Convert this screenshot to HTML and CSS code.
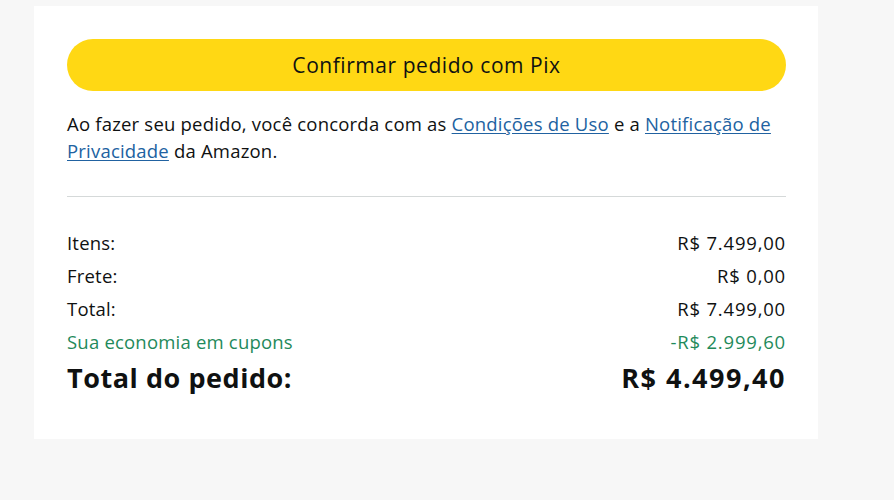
FILE: index.html
```html
<!DOCTYPE html>
<html lang="pt-BR">
<head>
<meta charset="utf-8">
<title>Confirmar pedido</title>
<link rel="stylesheet" href="styles.css">
</head>
<body>
<div class="page">
  <section class="card">
    <button class="place-order" type="button">Confirmar pedido com Pix</button>
    <p class="legal">Ao fazer seu pedido, você concorda com as <a href="#">Condições de Uso</a> e a <a href="#">Notificação de Privacidade</a> da Amazon.</p>
    <hr class="divider">
    <div class="summary">
      <div class="row"><span>Itens:</span><span class="value">R$ 7.499,00</span></div>
      <div class="row"><span>Frete:</span><span class="value">R$ 0,00</span></div>
      <div class="row"><span>Total:</span><span class="value">R$ 7.499,00</span></div>
      <div class="row savings"><span>Sua economia em cupons</span><span class="value">-R$ 2.999,60</span></div>
      <div class="row grand"><span>Total do pedido:</span><span class="value">R$ 4.499,40</span></div>
    </div>
  </section>
</div>
</body>
</html>
```

FILE: styles.css
```css
html, body {
  margin: 0;
  padding: 0;
  background: #f7f7f7;
}

body {
  font-family: "Open Sans", "Noto Sans", "Liberation Sans", sans-serif;
  color: #0f1111;
}

.page {
  padding: 6px 0 0 34px;
}

.card {
  width: 784px;
  box-sizing: border-box;
  background: #ffffff;
  padding: 33px 32px 43px 33px;
}

.place-order {
  display: block;
  width: 100%;
  height: 52px;
  border: none;
  border-radius: 26px;
  background: #ffd814;
  color: #0f1111;
  font-family: inherit;
  font-size: 21px;
  font-weight: 400;
  letter-spacing: 0.55px;
  cursor: pointer;
  padding: 0;
}

.legal {
  margin: 19px 0 0;
  font-size: 18.5px;
  line-height: 27px;
  letter-spacing: 0.2px;
}

.legal a {
  color: #2162a1;
  text-decoration: underline;
  text-underline-offset: 2px;
}

.divider {
  border: none;
  border-top: 1px solid #d5d9d9;
  margin: 32px 0 0;
}

.summary {
  margin-top: 29px;
  display: flex;
  flex-direction: column;
}

.row {
  display: flex;
  justify-content: space-between;
  font-size: 18.5px;
  line-height: 33px;
  letter-spacing: 0.2px;
}

.row .value {
  letter-spacing: 0.8px;
}

.savings {
  color: #1f8a5b;
}

.grand {
  margin-top: 2px;
  font-size: 27px;
  font-weight: 700;
  line-height: 36px;
  letter-spacing: 0.55px;
}

.grand .value {
  letter-spacing: 1.5px;
}
```
